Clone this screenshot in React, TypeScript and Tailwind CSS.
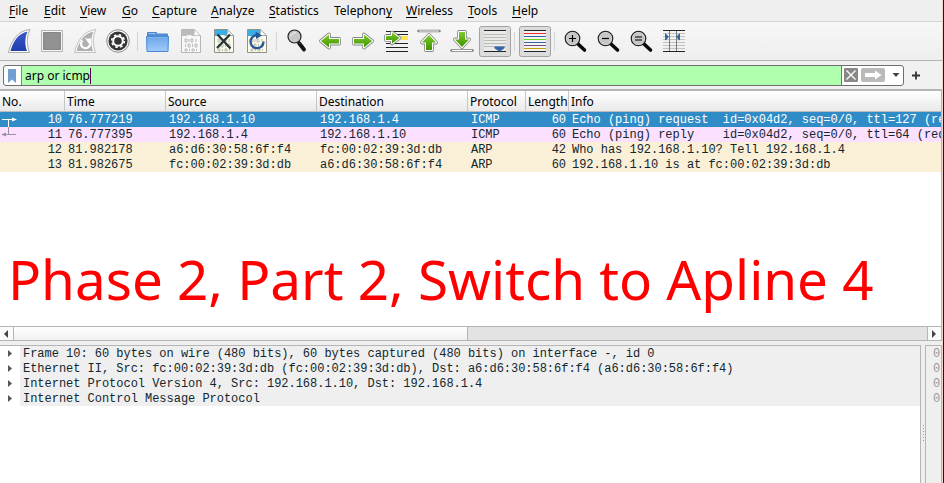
import type { ReactNode } from "react";

const menus: [string, string, string, string][] = [
  ["", "F", "ile", "w-[35px]"],
  ["", "E", "dit", "w-[36px]"],
  ["", "V", "iew", "w-[42px]"],
  ["", "G", "o", "w-[30px]"],
  ["", "C", "apture", "w-[59px]"],
  ["", "A", "nalyze", "w-[58px]"],
  ["", "S", "tatistics", "w-[65px]"],
  ["Telephon", "y", "", "w-[72px]"],
  ["", "W", "ireless", "w-[62px]"],
  ["", "T", "ools", "w-[44px]"],
  ["", "H", "elp", "w-[40px]"],
];

function Icon({ children }: { children?: ReactNode }) {
  return (
    <svg className="block h-[38px] w-[33px] shrink-0" viewBox="0 0 33 38" fill="none">
      {children}
    </svg>
  );
}

function Sep() {
  return (
    <div className="flex h-[38px] w-[7px] shrink-0 items-center justify-center">
      <div className="h-[19px] w-px bg-[#d4d4d4]" />
    </div>
  );
}

const FIN = "M6.500 30.500C9.500 18 16 8.500 28 7.500C25 14 24 21 27.500 30.500Z";
const FIN_IN = "M8.500 29C11.500 18.500 16.500 11.500 25.500 9.500C23 15.500 22.500 22 25 29Z";

const ROW_XS = "M11 17h2v3h-2zM15 17v3M17 17h2v3h-2zM22 17v3M11.500 22v3M14 22h2v3h-2zM18.500 22v3M21 22h2v3h-2zM11 27h2v2h-2zM15.500 27v2M18 27h2v2h-2zM22.500 27v2";

function Document({ top, body, edge, children }: { top: string; body: string; edge: string; children?: ReactNode }) {
  return (
    <Icon>
      <path d="M7.500 7.500H20.500L26.500 13.500V30.500H7.500Z" fill={body} stroke={edge} />
      <path d="M8 8H20.500V13H26V14H19Q15 12 12 14H8Z" fill={top} />
      <path d="M20.500 7.500Q21 12 19 13.500H26.500Z" fill="#fafafa" stroke={edge} strokeWidth=".6" />
      <path d={ROW_XS} stroke="#b4b4ad" strokeWidth=".9" />
      {children}
    </Icon>
  );
}

function Magnifier({ sign }: { sign: string }) {
  return (
    <Icon>
      <path d="M20 22L26.500 28" stroke="#0a0a0a" strokeWidth="3.600" strokeLinecap="round" />
      <circle cx="14.500" cy="16.500" r="7.200" fill="#c6c6c6" stroke="#222" strokeWidth="1.300" />
      <circle cx="14.500" cy="16.500" r="6.100" stroke="#dedede" strokeWidth=".7" />
      <path d={sign} stroke="#000" strokeWidth="1.200" />
    </Icon>
  );
}

function GreenArrow({ d, children }: { d: string; children?: ReactNode }) {
  return (
    <Icon>
      {children}
      <path d={d} fill="#fff" stroke="#858585" strokeWidth="3.800" strokeLinejoin="round" />
      <path d={d} fill="url(#green)" stroke="#fff" strokeWidth="2.200" strokeLinejoin="round" />
      <path d={d} fill="url(#green)" />
    </Icon>
  );
}

function Toolbar() {
  return (
    <div className="flex h-[38px] shrink-0 bg-linear-to-b from-[#f7f7f7] to-[#eeeeee] pl-[2px]">
      <Icon>
        <defs>
          <linearGradient id="blue" x2="0" y2="1"><stop stopColor="#3c59c8" /><stop offset="1" stopColor="#1f3fae" /></linearGradient>
          <linearGradient id="green" x2="0" y2="1"><stop stopColor="#7ccc2e" /><stop offset="1" stopColor="#419300" /></linearGradient>
          <linearGradient id="folder" x2="0" y2="1"><stop stopColor="#6aa5e8" /><stop offset="1" stopColor="#a0cbfa" /></linearGradient>
        </defs>
        <path d={FIN} fill="#fff" stroke="#a0a0a0" strokeWidth=".9" />
        <path d={FIN_IN} fill="url(#blue)" />
      </Icon>
      <Icon>
        <path d="M6.500 8.500h21v21h-21z" fill="#f6f6f6" stroke="#b5b5b5" />
        <path d="M8.500 10.500h17v17h-17z" fill="#929292" stroke="#868686" />
      </Icon>
      <Icon>
        <path d={FIN} fill="#f8f8f8" stroke="#bcbcbc" strokeWidth=".9" />
        <path d={FIN_IN} fill="#b0b0b0" />
        <path d="M14.500 18.500A4.500 4.500 0 1 0 21.500 19.500" stroke="#fff" strokeWidth="2.200" />
        <path d="M17 16.500H23.500L22 23Z" fill="#fff" />
      </Icon>
      <Icon>
        <circle cx="17" cy="19" r="11.300" fill="#fafafa" stroke="#8c8c8c" />
        <circle cx="17" cy="19" r="9.600" fill="#363636" />
        <circle cx="17" cy="19" r="4.800" fill="#333" stroke="#fff" strokeWidth="2" />
        <circle cx="17" cy="19" r="6.300" stroke="#fff" strokeWidth="1.600" strokeDasharray="2.500 2.450" />
      </Icon>
      <Sep />
      <Icon>
        <path d="M6.500 13V10.500H15.500V12H26.500V28H6.500Z" fill="#548fd4" stroke="#4685d1" />
        <path d="M7.500 11.500H14.500" stroke="#9bc4f2" />
        <path d="M5.500 14.500H27.500L27 29.500H6Z" fill="url(#folder)" stroke="#4888d4" />
        <path d="M6.500 15.500H26.500" stroke="#83b5ed" />
      </Icon>
      <Document top="#bcbcbc" body="#f8f8f8" edge="#b5b5b5" />
      <Document top="#3baee5" body="#fbfbe9" edge="#90918b">
        <path d="M10.500 12.500L23.500 26.500M23 12.500L10 26" stroke="#263238" strokeWidth="2.200" />
      </Document>
      <Document top="#3baee5" body="#fbfbe9" edge="#90918b">
        <path d="M17 13.200A6.500 6.500 0 1 0 23.500 19.500" stroke="#265797" strokeWidth="2.300" />
        <path d="M15.500 9.500L22 13.500L16 17Z" fill="#265797" />
      </Document>
      <Sep />
      <Icon>
        <path d="M19 21L24 27.500" stroke="#111" strokeWidth="3.800" strokeLinecap="round" />
        <path d="M17.500 18.500L20.500 22.500" stroke="#333" strokeWidth="1.500" />
        <circle cx="14.500" cy="14.500" r="6.500" fill="#c8c8c8" stroke="#222" strokeWidth="1.200" />
        <path d="M10.500 14Q12 10.500 16 10.500" stroke="#eee" />
      </Icon>
      <GreenArrow d="M26 17H16V12.500L8 19L16 25.500V21.500H26Z" />
      <GreenArrow d="M8 17H18V12.500L26 19L18 25.500V21.500H8Z" />
      <Icon>
        <path d="M7 9.500H29M7 12.500H29M7 21.500H29M7 25.500H29M7 29.500H29" stroke="#1e2325" />
        <path d="M22 14h7v4h-7z" fill="#fbe34b" />
        <path d="M7 14H13V10.500L20.500 16L13 21.500V18H7Z" fill="#fff" stroke="#858585" strokeWidth="3.600" strokeLinejoin="round" />
        <path d="M7 14H13V10.500L20.500 16L13 21.500V18H7Z" fill="#fff" stroke="#fff" strokeWidth="2" strokeLinejoin="round" />
        <path d="M7 14H13V10.500L20.500 16L13 21.500V18H7Z" fill="url(#green)" />
      </Icon>
      <GreenArrow d="M17 13L24 20.500H20V28H14V20.500H10Z">
        <path d="M6.500 9H27.500" stroke="#7b7b7b" strokeWidth="2.500" strokeLinecap="round" />
        <path d="M7 9H27" stroke="#fff" />
      </GreenArrow>
      <GreenArrow d="M17 25L24 17.500H20V10H14V17.500H10Z">
        <path d="M6.500 28.500H27.500" stroke="#7b7b7b" strokeWidth="2.500" strokeLinecap="round" />
        <path d="M7 28.500H27" stroke="#fff" />
      </GreenArrow>
      <Icon>
        <rect x="1.500" y="4.500" width="31" height="30" rx="2" fill="#dcdcdc" stroke="#a2a2a2" />
        <path d="M6 9h22v20H6z" fill="#eaeae8" />
        <path d="M6 12.500H28M6 15.500H28M6 18.500H28M6 21.500H28M6 24.500H28" stroke="#b9bcb6" />
        <path d="M6 8.500H28M6 29.500H28" stroke="#202628" />
        <path d="M16.500 24.500H26.500Q27.500 26 24 28L21.500 29.500L19 28Q15.500 26 16.500 24.500Z" fill="#3465a4" />
      </Icon>
      <Sep />
      <Icon>
        <rect x="1.500" y="4.500" width="31" height="30" rx="2" fill="#dcdcdc" stroke="#a2a2a2" />
        <path d="M6 9h22v20H6z" fill="#f4f4f4" />
        <path d="M6 8.500H28M6 29.500H28" stroke="#202628" />
        <path d="M6 11.500H28" stroke="#ef2929" />
        <path d="M6 14.500H28M6 20.500H28" stroke="#3465a4" />
        <path d="M6 17.500H28" stroke="#73d216" />
        <path d="M6 23.500H28" stroke="#75507b" />
        <path d="M6 26.500H28" stroke="#c4a000" />
      </Icon>
      <Sep />
      <Magnifier sign="M11 16.500H18M14.500 13V20" />
      <Magnifier sign="M11 16.500H18" />
      <Magnifier sign="M11 15H18M11 18H18" />
      <Icon>
        <path d="M6 11.500H28M6 14.500H28M6 17.500H28M6 20.500H28M6 23.500H28M6 26.500H28" stroke="#c1c4be" />
        <path d="M6 8.500H28M6 29.500H28" stroke="#202628" />
        <path d="M12.500 9V29M19.500 9V29" stroke="#777a75" />
        <path d="M8 11.500Q9 11 10 13L12 14.500L10 17Q9 19 8 18Z M23 11.500Q22 11 21 13L19.500 14.500L21 17Q22 19 23 18Z" fill="#3465a4" />
      </Icon>
    </div>
  );
}

const columns: [string, string][] = [
  ["No.", "w-[65px] pl-[2px]"],
  ["Time", "w-[101px] pl-[2px]"],
  ["Source", "w-[151px] pl-[2px]"],
  ["Destination", "w-[151px] pl-[2px]"],
  ["Protocol", "w-[58px] pl-[2px]"],
  ["Length", "w-[43px] pl-[2px]"],
  ["Info", "w-[373px] pl-[2px]"],
];

const packets: [string, string[]][] = [
  ["bg-[#308cc6] text-white", ["10", "76.777219", "192.168.1.10", "192.168.1.4", "ICMP", "60", "Echo (ping) request  id=0x04d2, seq=0/0, ttl=127 (re"]],
  ["bg-[#fce0ff] text-[#12272e]", ["11", "76.777395", "192.168.1.4", "192.168.1.10", "ICMP", "60", "Echo (ping) reply    id=0x04d2, seq=0/0, ttl=64 (req"]],
  ["bg-[#faf0d7] text-[#12272e]", ["12", "81.982178", "a6:d6:30:58:6f:f4", "fc:00:02:39:3d:db", "ARP", "42", "Who has 192.168.1.10? Tell 192.168.1.4"]],
  ["bg-[#faf0d7] text-[#12272e]", ["13", "81.982675", "fc:00:02:39:3d:db", "a6:d6:30:58:6f:f4", "ARP", "60", "192.168.1.10 is at fc:00:02:39:3d:db"]],
];

const cells = [
  "w-[62px] text-right",
  "w-[107px] pl-[6px]",
  "w-[151px]",
  "w-[151px]",
  "w-[58px]",
  "w-[37px] text-right",
  "w-[375px] pl-[6px]",
];

const details = [
  "Frame 10: 60 bytes on wire (480 bits), 60 bytes captured (480 bits) on interface -, id 0",
  "Ethernet II, Src: fc:00:02:39:3d:db (fc:00:02:39:3d:db), Dst: a6:d6:30:58:6f:f4 (a6:d6:30:58:6f:f4)",
  "Internet Protocol Version 4, Src: 192.168.1.10, Dst: 192.168.1.4",
  "Internet Control Message Protocol",
];

export default function App() {
  return (
    <div className="flex h-[483px] w-[944px] overflow-hidden bg-[#efefef] font-['Noto_Sans',sans-serif] text-[12px] text-black">
      <div className="flex w-[942px] shrink-0 flex-col">
        <nav className="flex h-[22px] shrink-0 border-b border-[#d2d2d2] pl-[9px] leading-[21px]">
          {menus.map(([before, key, after, width]) => (
            <span key={before + key} className={`${width} shrink-0 whitespace-nowrap`}>
              {before}
              <span className="underline decoration-1 underline-offset-2 [text-decoration-skip-ink:none]">{key}</span>
              {after}
            </span>
          ))}
        </nav>
        <Toolbar />
        <div className="h-px shrink-0 bg-[#b5b5b5]" />
        <div className="flex h-[28px] shrink-0 items-start bg-[#f1f1f1] pt-[4px] pl-[3px]">
          <div className="flex h-[21px] w-[901px] overflow-hidden rounded-[3px] border border-[#6f6f6f] bg-white">
            <div className="flex w-[18px] items-center border-r border-[#858585] pl-[4px]">
              <svg className="h-[14px] w-[8px]" viewBox="0 0 8 14"><path d="M0 0H8V14L4 10.500L0 14Z" fill="#729fcf" /></svg>
            </div>
            <div className="flex w-[819px] items-center bg-[#afffaf] pl-[3px]">
              <span>arp or icmp</span>
              <span className="h-[16px] w-px bg-[#500050]" />
            </div>
            <div className="flex flex-1 items-center border-l border-[#777]">
              <svg className="h-[19px] w-[60px]" viewBox="0 0 60 19">
                <rect x="2" y="2" width="14" height="14" rx="1" fill="#888a85" />
                <path d="M4.500 4.500L13.500 13.500M13.500 4.500L4.500 13.500" stroke="#fff" strokeWidth="1.300" />
                <rect x="19" y="2" width="24" height="14" rx="2" fill="#babab8" />
                <path d="M23 7H33V4.500L39.500 9L33 13.500V11H23Z" fill="#fff" />
                <path d="M50.500 7H57.500L54 11Z" fill="#444" />
              </svg>
            </div>
          </div>
          <svg className="mt-[6px] ml-[8px] h-[9px] w-[9px]" viewBox="0 0 9 9"><path d="M0 4.500H8M4 .5V8.500" stroke="#333" strokeWidth="1.800" /></svg>
        </div>

        <section className="flex h-[252px] shrink-0 flex-col border-t-2 border-r border-[#b5b5b5] bg-white">
          <div className="flex h-[21px] shrink-0 overflow-hidden border-b border-[#bbb] bg-linear-to-b from-white to-[#e9e9e9] leading-[22px]">
            {columns.map(([name, cls]) => (
              <div key={name} className={`${cls} shrink-0 border-r border-[#c6c6c6] last:border-r-0`}>{name}</div>
            ))}
          </div>
          <div className="relative overflow-hidden font-['Liberation_Mono',monospace] leading-[17px] tracking-[-0.02px]">
            {packets.map(([color, values]) => (
              <div key={values[0]} className={`flex h-[15px] whitespace-pre ${color}`}>
                {values.map((value, i) => (
                  <span key={i} className={`${cells[i]} shrink-0`}>{value}</span>
                ))}
              </div>
            ))}
            <svg className="absolute top-0 left-0 h-[30px] w-[18px]" viewBox="0 0 18 30" fill="none">
              <path d="M2 7.500H16M8.500 7.500V15" stroke="#fff" />
              <path d="M12 5.500L17 7.500L12 9.500Z" fill="#fff" />
              <path d="M8.500 15V22.500M2 22.500H16" stroke="#9a92a0" />
              <path d="M6 20.500L1 22.500L6 24.500Z" fill="#9a92a0" />
            </svg>
          </div>
          <div className="flex flex-1 items-end pb-[19px] pl-[8px]">
            <p className="text-[54.750px] leading-none whitespace-nowrap text-[#ff0000]">Phase 2, Part 2, Switch to Apline 4</p>
          </div>
          <div className="flex h-[15px] shrink-0 border-y border-[#b5b5b5] bg-[#e3e3e3]">
            <div className="flex w-[14px] items-center border-r border-[#b5b5b5] bg-[#fafafa] pl-[4px]">
              <svg className="h-[8px] w-[4px]" viewBox="0 0 4 8"><path d="M4 0V8L0 4Z" fill="#444" /></svg>
            </div>
            <div className="w-[454px] border-r border-[#b5b5b5] bg-linear-to-b from-white to-[#f1f1f1]" />
            <div className="flex-1" />
            <div className="flex w-[14px] items-center border-l border-[#b5b5b5] bg-[#fafafa] pl-[4px]">
              <svg className="h-[8px] w-[4px]" viewBox="0 0 4 8"><path d="M0 0V8L4 4Z" fill="#444" /></svg>
            </div>
          </div>
        </section>

        <div className="flex flex-1 pt-[4px]">
          <section className="w-[921px] border-t border-r border-[#b5b5b5] bg-white font-['Liberation_Mono',monospace] leading-[17px] tracking-[-0.025px] text-[#12272e]">
            {details.map((line) => (
              <div key={line} className="flex h-[15px]">
                <div className="flex w-[20px] pt-[4px] pl-[8px]">
                  <svg className="h-[7px] w-[4px]" viewBox="0 0 4 7"><path d="M0 0V7L4 3.500Z" fill="#555" /></svg>
                </div>
                <div className="flex-1 bg-[#efefef] pl-[3px] whitespace-pre">{line}</div>
              </div>
            ))}
          </section>
          <div className="flex w-[4px] flex-col items-end gap-[2px] pt-[80px]">
            {[0, 1, 2, 3, 4, 5].map((n) => <span key={n} className="mr-[1px] h-px w-px bg-[#999]" />)}
          </div>
          <section className="w-[17px] border-t border-x border-[#b5b5b5] pt-px pl-[7px] font-['Liberation_Mono',monospace] leading-[15px] text-[#999]">
            <div>0</div><div>0</div><div>0</div><div>0</div>
          </section>
        </div>
      </div>
      <div className="w-px bg-[#f0d5d0]" />
      <div className="w-px bg-[#1e1825]" />
    </div>
  );
}
